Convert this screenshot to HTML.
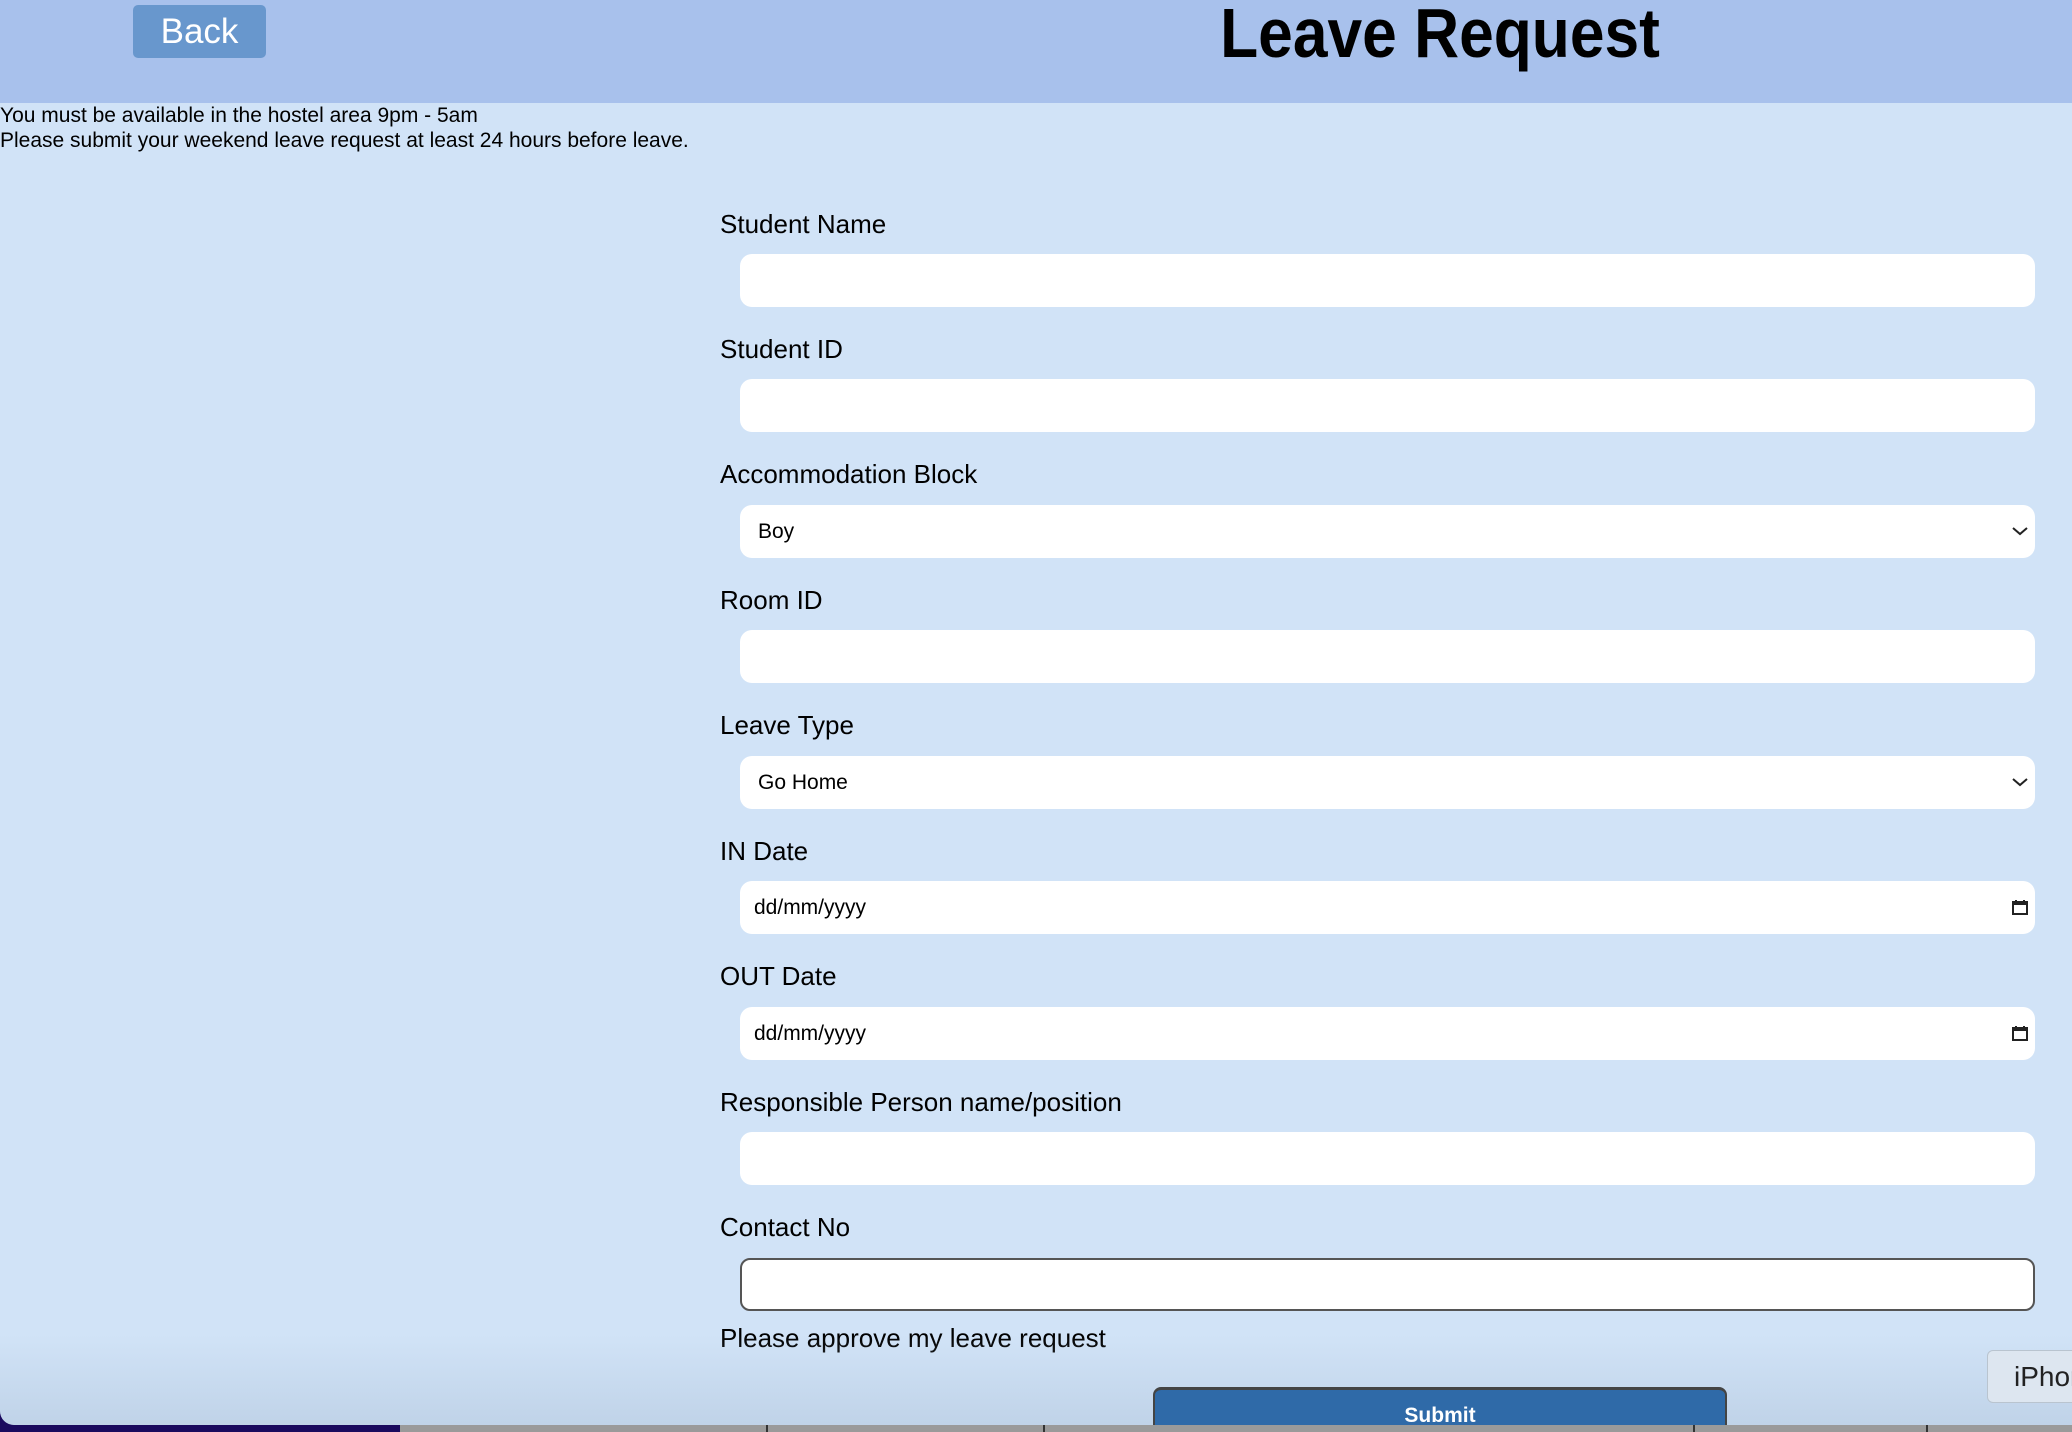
<!DOCTYPE html>
<html><head><meta charset="utf-8"><style>
*{margin:0;padding:0;box-sizing:border-box}
html,body{width:2072px;height:1432px;overflow:hidden;background:#999}
body{font-family:"Liberation Sans",Arial,sans-serif;position:relative}
.dark{position:absolute;left:0;top:1400px;width:400px;height:32px;background:#1a0a5e}
.gray{position:absolute;left:400px;top:1420px;width:1672px;height:12px;background:#9a9a9a}
.vl{position:absolute;top:1420px;width:2px;height:12px;background:#333}
.page{position:absolute;left:0;top:0;width:2072px;height:1425px;background:#d1e3f7;border-bottom-left-radius:14px;overflow:hidden}
.page:after{content:"";position:absolute;left:0;right:0;bottom:0;height:90px;background:linear-gradient(rgba(180,200,220,0),rgba(180,200,222,.6))}
.hdr{position:absolute;left:0;top:0;width:2072px;height:103px;background:#a8c1ec}
.back{position:absolute;left:133px;top:5px;width:133px;height:53px;background:#6897cd;border-radius:5px;color:#fff;font-size:35px;text-align:center;line-height:53px}
.title{position:absolute;left:1100px;width:680px;text-align:center;top:-7px;font-size:70px;font-weight:bold;color:#000;transform:scaleX(0.89)}
.note{position:absolute;left:0;top:103px;font-size:21px;line-height:25px;color:#000}
.lbl{position:absolute;left:720px;font-size:26px;color:#000;line-height:30px}
.inp{position:absolute;left:740px;width:1295px;height:53px;background:#fff;border-radius:12px;font-size:21px;line-height:53px;color:#000}
.sub{position:absolute;left:1153px;top:1387px;width:574px;height:60px;background:#2f6aa8;border-top:3px solid #444;border-left:2px solid #444;border-right:2px solid #444;border-radius:8px 8px 0 0;color:#fff;font-size:21px;font-weight:bold;text-align:center;padding-top:14px;z-index:2}
.ipho{position:absolute;left:1987px;top:1350px;width:100px;height:53px;background:#dde6f0;border:1px solid #b9c4cf;border-radius:6px;font-size:28px;line-height:51px;padding-left:26px;color:#222;z-index:2}
</style></head><body>
<div class="dark"></div><div class="gray"></div>
<div class="vl" style="left:766px"></div><div class="vl" style="left:1043px"></div><div class="vl" style="left:1693px"></div><div class="vl" style="left:1926px"></div>
<div class="page">
<div class="hdr"><div class="back">Back</div><div class="title">Leave Request</div></div>
<div class="note">You must be available in the hostel area 9pm - 5am<br>Please submit your weekend leave request at least 24 hours before leave.</div>

<div class="lbl" style="top:209px">Student Name</div>
<div class="inp" style="top:254px"></div>
<div class="lbl" style="top:334px">Student ID</div>
<div class="inp" style="top:379px"></div>
<div class="lbl" style="top:459px">Accommodation Block</div>
<div class="inp" style="top:505px;padding-left:18px">Boy<svg style="position:absolute;right:6px;top:20px" width="18" height="12" viewBox="0 0 18 12"><path d="M2 3 L9 9 L16 3" fill="none" stroke="#222" stroke-width="2"/></svg></div>
<div class="lbl" style="top:585px">Room ID</div>
<div class="inp" style="top:630px"></div>
<div class="lbl" style="top:710px">Leave Type</div>
<div class="inp" style="top:756px;padding-left:18px">Go Home<svg style="position:absolute;right:6px;top:20px" width="18" height="12" viewBox="0 0 18 12"><path d="M2 3 L9 9 L16 3" fill="none" stroke="#222" stroke-width="2"/></svg></div>
<div class="lbl" style="top:836px">IN Date</div>
<div class="inp" style="top:881px;padding-left:14px">dd/mm/yyyy<svg style="position:absolute;right:6px;top:17px" width="18" height="18" viewBox="0 0 18 18"><rect x="2" y="4" width="14" height="12" fill="none" stroke="#222" stroke-width="2"/><rect x="2" y="4" width="14" height="3" fill="#222"/><path d="M5 2v3M13 2v3" stroke="#222" stroke-width="2"/></svg></div>
<div class="lbl" style="top:961px">OUT Date</div>
<div class="inp" style="top:1007px;padding-left:14px">dd/mm/yyyy<svg style="position:absolute;right:6px;top:17px" width="18" height="18" viewBox="0 0 18 18"><rect x="2" y="4" width="14" height="12" fill="none" stroke="#222" stroke-width="2"/><rect x="2" y="4" width="14" height="3" fill="#222"/><path d="M5 2v3M13 2v3" stroke="#222" stroke-width="2"/></svg></div>
<div class="lbl" style="top:1087px">Responsible Person name/position</div>
<div class="inp" style="top:1132px"></div>
<div class="lbl" style="top:1212px">Contact No</div>
<div class="inp" style="top:1258px;border:2px solid #555;border-radius:10px"></div>
<div class="lbl" style="top:1323px">Please approve my leave request</div>
<div class="sub">Submit</div>
<div class="ipho">iPhone</div>
</div>
</body></html>
